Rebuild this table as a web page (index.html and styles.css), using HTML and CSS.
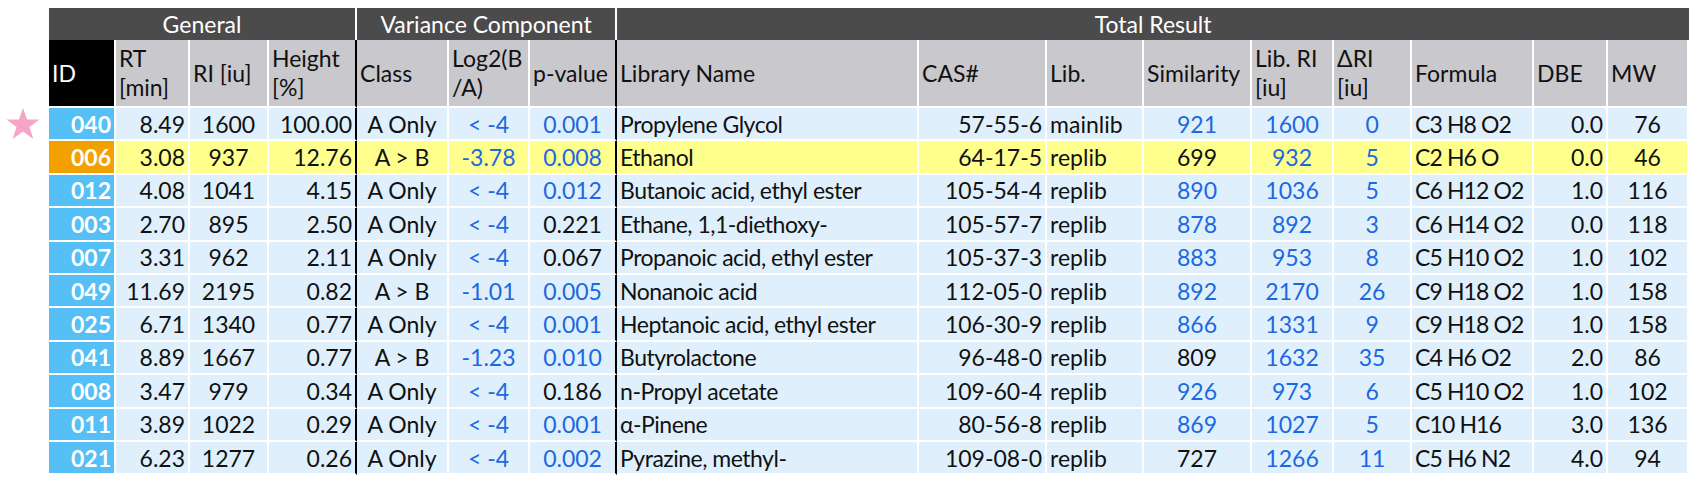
FILE: index.html
```html
<!DOCTYPE html>
<html>
<head>
<meta charset="utf-8">
<link rel="stylesheet" href="styles.css">
</head>
<body>
<div class="page">
  <div class="gutter">
    <svg class="star" width="34" height="32" viewBox="0 0 34 32"><polygon points="17,0 21,11.5 33.5,11.5 23.5,19 27.3,31 17,23.6 6.7,31 10.5,19 0.5,11.5 13,11.5" fill="#f6a5c8"/></svg>
  </div>
  <table class="grid">
    <colgroup>
      <col style="width:67px"><col style="width:74px"><col style="width:79px"><col style="width:88px">
      <col style="width:92px"><col style="width:81px"><col style="width:87px">
      <col style="width:302px"><col style="width:128px"><col style="width:97px"><col style="width:108px">
      <col style="width:82px"><col style="width:78px"><col style="width:122px"><col style="width:74px"><col style="width:81px">
    </colgroup>
    <thead>
      <tr class="group">
        <th colspan="4" class="sep">General</th>
        <th colspan="3" class="sep">Variance Component</th>
        <th colspan="9">Total Result</th>
      </tr>
      <tr class="labels">
        <th class="idh">ID</th>
        <th>RT<br>[min]</th>
        <th>RI [iu]</th>
        <th class="bk">Height<br>[%]</th>
        <th>Class</th>
        <th>Log2(B<br>/A)</th>
        <th class="bk">p-value</th>
        <th>Library Name</th>
        <th>CAS#</th>
        <th>Lib.</th>
        <th>Similarity</th>
        <th>Lib. RI<br>[iu]</th>
        <th>ΔRI<br>[iu]</th>
        <th>Formula</th>
        <th>DBE</th>
        <th>MW</th>
      </tr>
    </thead>
    <tbody>
      <tr><td class="id">040</td><td class="r">8.49</td><td class="c">1600</td><td class="r bk">100.00</td><td class="c">A Only</td><td class="c b">&lt; -4</td><td class="c b bk">0.001</td><td class="n">Propylene Glycol</td><td class="r">57-55-6</td><td>mainlib</td><td class="c b">921</td><td class="c b">1600</td><td class="c b">0</td><td class="f">C3 H8 O2</td><td class="r">0.0</td><td class="c">76</td></tr>
      <tr class="hl"><td class="id">006</td><td class="r">3.08</td><td class="c">937</td><td class="r bk">12.76</td><td class="c">A &gt; B</td><td class="c b">-3.78</td><td class="c b bk">0.008</td><td class="n">Ethanol</td><td class="r">64-17-5</td><td>replib</td><td class="c">699</td><td class="c b">932</td><td class="c b">5</td><td class="f">C2 H6 O</td><td class="r">0.0</td><td class="c">46</td></tr>
      <tr><td class="id">012</td><td class="r">4.08</td><td class="c">1041</td><td class="r bk">4.15</td><td class="c">A Only</td><td class="c b">&lt; -4</td><td class="c b bk">0.012</td><td class="n">Butanoic acid, ethyl ester</td><td class="r">105-54-4</td><td>replib</td><td class="c b">890</td><td class="c b">1036</td><td class="c b">5</td><td class="f">C6 H12 O2</td><td class="r">1.0</td><td class="c">116</td></tr>
      <tr><td class="id">003</td><td class="r">2.70</td><td class="c">895</td><td class="r bk">2.50</td><td class="c">A Only</td><td class="c b">&lt; -4</td><td class="c bk">0.221</td><td class="n">Ethane, 1,1-diethoxy-</td><td class="r">105-57-7</td><td>replib</td><td class="c b">878</td><td class="c b">892</td><td class="c b">3</td><td class="f">C6 H14 O2</td><td class="r">0.0</td><td class="c">118</td></tr>
      <tr><td class="id">007</td><td class="r">3.31</td><td class="c">962</td><td class="r bk">2.11</td><td class="c">A Only</td><td class="c b">&lt; -4</td><td class="c bk">0.067</td><td class="n">Propanoic acid, ethyl ester</td><td class="r">105-37-3</td><td>replib</td><td class="c b">883</td><td class="c b">953</td><td class="c b">8</td><td class="f">C5 H10 O2</td><td class="r">1.0</td><td class="c">102</td></tr>
      <tr><td class="id">049</td><td class="r">11.69</td><td class="c">2195</td><td class="r bk">0.82</td><td class="c">A &gt; B</td><td class="c b">-1.01</td><td class="c b bk">0.005</td><td class="n">Nonanoic acid</td><td class="r">112-05-0</td><td>replib</td><td class="c b">892</td><td class="c b">2170</td><td class="c b">26</td><td class="f">C9 H18 O2</td><td class="r">1.0</td><td class="c">158</td></tr>
      <tr><td class="id">025</td><td class="r">6.71</td><td class="c">1340</td><td class="r bk">0.77</td><td class="c">A Only</td><td class="c b">&lt; -4</td><td class="c b bk">0.001</td><td class="n">Heptanoic acid, ethyl ester</td><td class="r">106-30-9</td><td>replib</td><td class="c b">866</td><td class="c b">1331</td><td class="c b">9</td><td class="f">C9 H18 O2</td><td class="r">1.0</td><td class="c">158</td></tr>
      <tr><td class="id">041</td><td class="r">8.89</td><td class="c">1667</td><td class="r bk">0.77</td><td class="c">A &gt; B</td><td class="c b">-1.23</td><td class="c b bk">0.010</td><td class="n">Butyrolactone</td><td class="r">96-48-0</td><td>replib</td><td class="c">809</td><td class="c b">1632</td><td class="c b">35</td><td class="f">C4 H6 O2</td><td class="r">2.0</td><td class="c">86</td></tr>
      <tr><td class="id">008</td><td class="r">3.47</td><td class="c">979</td><td class="r bk">0.34</td><td class="c">A Only</td><td class="c b">&lt; -4</td><td class="c bk">0.186</td><td class="n">n-Propyl acetate</td><td class="r">109-60-4</td><td>replib</td><td class="c b">926</td><td class="c b">973</td><td class="c b">6</td><td class="f">C5 H10 O2</td><td class="r">1.0</td><td class="c">102</td></tr>
      <tr><td class="id">011</td><td class="r">3.89</td><td class="c">1022</td><td class="r bk">0.29</td><td class="c">A Only</td><td class="c b">&lt; -4</td><td class="c b bk">0.001</td><td class="n">α-Pinene</td><td class="r">80-56-8</td><td>replib</td><td class="c b">869</td><td class="c b">1027</td><td class="c b">5</td><td class="f">C10 H16</td><td class="r">3.0</td><td class="c">136</td></tr>
      <tr><td class="id">021</td><td class="r">6.23</td><td class="c">1277</td><td class="r bk">0.26</td><td class="c">A Only</td><td class="c b">&lt; -4</td><td class="c b bk">0.002</td><td class="n">Pyrazine, methyl-</td><td class="r">109-08-0</td><td>replib</td><td class="c">727</td><td class="c b">1266</td><td class="c b">11</td><td class="f">C5 H6 N2</td><td class="r">4.0</td><td class="c">94</td></tr>
    </tbody>
  </table>
</div>
</body>
</html>
```

FILE: styles.css
```css
html, body {
  margin: 0;
  padding: 0;
  background: #ffffff;
}

.page {
  display: flex;
  padding-top: 8px;
  font-family: Lato, "Liberation Sans", sans-serif;
  font-size: 23px;
  color: #111111;
}

.gutter {
  width: 49px;
  flex: none;
  display: flex;
  justify-content: center;
  padding-top: 100px;
  box-sizing: border-box;
}

.star {
  display: block;
  margin-left: 2px;
  margin-right: 6px;
}

.grid {
  table-layout: fixed;
  width: 1640px;
  border-collapse: separate;
  border-spacing: 0;
}

.grid th,
.grid td {
  padding: 0 3px;
  white-space: nowrap;
  overflow: hidden;
  box-sizing: border-box;
}

.group th {
  height: 32px;
  background: #4b4b4b;
  color: #ffffff;
  font-weight: normal;
  text-align: center;
  line-height: 32px;
}

.group th.sep {
  border-right: 2px solid #ffffff;
}

.labels th {
  height: 68px;
  background: #c9c8cc;
  font-weight: normal;
  text-align: left;
  line-height: 29px;
  vertical-align: middle;
  border-right: 2px solid #ffffff;
  border-bottom: 2px solid #ffffff;
}

.labels th.idh {
  background: #000000;
  color: #ffffff;
}

.grid td {
  height: 33.4px;
  line-height: 30px;
  background: #dff0fc;
  border-right: 2px solid #ffffff;
  border-bottom: 2px solid #ffffff;
  vertical-align: middle;
}

.grid tr.hl td {
  background: #ffff8e;
}

.grid td.id {
  background: #55bff6;
  color: #ffffff;
  font-weight: bold;
  text-align: right;
}

.grid tr.hl td.id {
  background: #f2a100;
}

.grid .bk {
  border-right: 2px solid #000000;
}

.grid td.r { text-align: right; }
.grid td.c { text-align: center; }
.grid td.b { color: #1b68e2; }
.grid td.n { letter-spacing: -0.5px; }
.grid td.f { letter-spacing: -0.9px; }
```
